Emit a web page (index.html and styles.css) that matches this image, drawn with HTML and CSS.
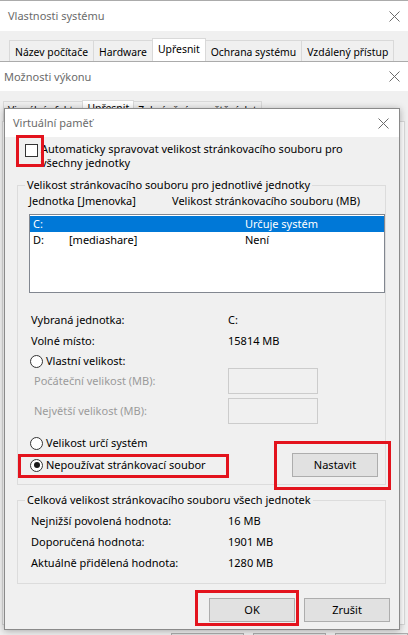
FILE: index.html
```html
<!DOCTYPE html>
<html lang="cs">
<head>
<meta charset="utf-8">
<title>Virtuální paměť</title>
<link rel="stylesheet" href="styles.css">
</head>
<body>
<div class="win win-sys">
  <div class="titlebar">
    <span class="title">Vlastnosti systému</span>
    <svg class="close" width="11" height="11" viewBox="0 0 11 11"><path d="M0.5 0.5L10.5 10.5M10.5 0.5L0.5 10.5"/></svg>
  </div>
  <div class="tabs">
    <div class="tab">Název počítače</div>
    <div class="tab">Hardware</div>
    <div class="tab active">Upřesnit</div>
    <div class="tab">Ochrana systému</div>
    <div class="tab last">Vzdálený přístup</div>
  </div>
  <div class="tabpanel"></div>
</div>

<div class="win win-perf">
  <div class="titlebar">
    <span class="title">Možnosti výkonu</span>
    <svg class="close" width="11" height="11" viewBox="0 0 11 11"><path d="M0.5 0.5L10.5 10.5M10.5 0.5L0.5 10.5"/></svg>
  </div>
  <div class="tabs">
    <div class="tab">Vizuální efekty</div>
    <div class="tab active">Upřesnit</div>
    <div class="tab last">Zabránění spouštění dat</div>
  </div>
  <div class="tabpanel perf-panel"></div>
  <div class="perf-buttons">
    <div class="btn small"></div>
    <div class="btn small"></div>
    <div class="btn small"></div>
  </div>
</div>

<div class="dialog">
  <div class="titlebar dlg-title">
    <span class="title">Virtuální paměť</span>
    <svg class="close" width="11" height="11" viewBox="0 0 11 11"><path d="M0.5 0.5L10.5 10.5M10.5 0.5L0.5 10.5"/></svg>
  </div>
  <div class="dlg-body">
    <div class="check-row">
      <span class="checkbox"></span>
      <span class="check-label">Automaticky spravovat velikost stránkovacího souboru pro<br>všechny jednotky</span>
    </div>

    <fieldset class="group group-drives">
      <legend>Velikost stránkovacího souboru pro jednotlivé jednotky</legend>
      <div class="list-head">
        <span>Jednotka [Jmenovka]</span>
        <span>Velikost stránkovacího souboru (MB)</span>
      </div>
      <div class="listbox">
        <div class="list-row selected"><span>C:</span><span></span><span>Určuje systém</span></div>
        <div class="list-row"><span>D:</span><span>[mediashare]</span><span>Není</span></div>
      </div>

      <div class="kv row-a"><span>Vybraná jednotka:</span><span>C:</span></div>
      <div class="kv row-b"><span>Volné místo:</span><span>15814 MB</span></div>
      <div class="radio-row row-c"><span class="radio"></span><span>Vlastní velikost:</span></div>
      <div class="field-row row-d"><span class="disabled">Počáteční velikost (MB):</span><span class="input"></span></div>
      <div class="field-row row-e"><span class="disabled">Největší velikost (MB):</span><span class="input"></span></div>
      <div class="radio-row row-f"><span class="radio"></span><span>Velikost určí systém</span></div>
      <div class="row-g">
        <div class="radio-row"><span class="radio checked"></span><span>Nepoužívat stránkovací soubor</span></div>
        <div class="btn set-btn">Nastavit</div>
      </div>
    </fieldset>

    <fieldset class="group group-total">
      <legend>Celková velikost stránkovacího souboru všech jednotek</legend>
      <div class="kv"><span>Nejnižší povolená hodnota:</span><span>16 MB</span></div>
      <div class="kv"><span>Doporučená hodnota:</span><span>1901 MB</span></div>
      <div class="kv"><span>Aktuálně přidělená hodnota:</span><span>1280 MB</span></div>
    </fieldset>

    <div class="dlg-buttons">
      <div class="btn">OK</div>
      <div class="btn">Zrušit</div>
    </div>
  </div>
</div>

<div class="mark mark-check"></div>
<div class="mark mark-radio"></div>
<div class="mark mark-set"></div>
<div class="mark mark-ok"></div>
</body>
</html>
```

FILE: styles.css
```css
* { box-sizing: border-box; }
html, body { margin: 0; padding: 0; }
body {
  width: 408px;
  height: 635px;
  overflow: hidden;
  position: relative;
  background: #f0f0f0;
  font-family: "Noto Sans", "Open Sans", sans-serif;
  font-size: 11px;
  line-height: 14px;
  color: #000;
}

/* generic windows */
.win {
  position: absolute;
  background: #f0f0f0;
  border: 1px solid #ababab;
}
.titlebar {
  background: #fff;
  display: flex;
  align-items: center;
  justify-content: space-between;
}
.title { color: #6b6b6b; font-size: 11px; }
.close { display: block; }
.close path { stroke: #6b6b6b; stroke-width: 1; fill: none; }

.tabs { display: flex; align-items: flex-end; }
.tab {
  height: 22px;
  padding: 0 5px;
  display: flex;
  align-items: center;
  border: 1px solid #d9d9d9;
  border-right: none;
  border-bottom: none;
  background: #f0f0f0;
  white-space: nowrap;
  font-size: 10.4px;
}
.tab.last { border-right: 1px solid #d9d9d9; }
.tab.active {
  background: #fff;
  height: 25px;
  margin-bottom: -1px;
  padding-bottom: 4px;
  border-right: 1px solid #d9d9d9;
  margin-right: -1px;
  position: relative;
  z-index: 1;
}
.tabpanel {
  border: 1px solid #d9d9d9;
  background: #fff;
}

/* Vlastnosti systému */
.win-sys { left: -1px; top: 0; width: 422px; height: 90px; z-index: 1; }
.win-sys .titlebar { height: 30px; padding: 0 20px 0 8px; }
.win-sys .tabs { margin-top: 7px; padding-left: 9px; }
.win-sys .tabpanel { height: 40px; margin-right: 16px; }

/* Možnosti výkonu */
.win-perf { left: -9px; top: 61px; width: 426px; height: 590px; z-index: 2; }
.win-perf .titlebar { height: 29px; padding: 0 16px 0 12px; }
.win-perf .tabs { margin-top: 9px; padding-left: 11px; }
.win-perf .tab {
  height: 20px;
  font-size: 10.4px;
  padding: 1px 4px 0;
  align-items: flex-start;
}
.win-perf .tab.active { height: 22px; padding-top: 0; }
.perf-panel { margin-left: 10px; width: 403px; height: 504px; }
.perf-buttons { display: flex; gap: 9px; margin-top: 8px; padding-left: 179px; }

/* buttons */
.btn {
  width: 86px;
  height: 24px;
  display: flex;
  align-items: center;
  justify-content: center;
  background: #e1e1e1;
  border: 1px solid #adadad;
}
.btn.small { width: 73px; height: 23px; }

/* Virtuální paměť dialog */
.dialog {
  position: absolute;
  z-index: 3;
  left: 4px;
  top: 108px;
  width: 396px;
  height: 522px;
  border: 1px solid #8a8a8a;
  background: #f0f0f0;
  box-shadow: 0 1px 7px rgba(0, 0, 0, 0.3);
  display: flex;
  flex-direction: column;
}
.dlg-title { height: 28px; padding: 0 10px 0 8px; }
.dlg-body { padding: 5px 13px 7px 12px; }

.check-row { display: flex; gap: 3px; margin-left: 8px; }
.checkbox {
  flex: none;
  width: 13px;
  height: 13px;
  margin-top: 2px;
  border: 1px solid #333;
  background: #fff;
}

.group {
  border: 1px solid #dcdcdc;
  margin: 8px 0 0;
  padding: 0;
  min-width: 0;
}
.group legend {
  padding: 0 2px;
  margin-left: 7px;
  line-height: 14px;
}
.group-drives { padding-bottom: 7px; }
.group-total { padding-bottom: 13px; }

.list-head {
  display: grid;
  grid-template-columns: 143px 1fr;
  padding: 2px 0 0 11px;
  height: 16px;
}
.listbox {
  margin: 6px 0 0 11px;
  height: 79px;
  border: 1px solid #828790;
  background: #fff;
  padding: 1px 0;
}
.list-row {
  display: grid;
  grid-template-columns: 36px 176px 1fr;
  align-items: center;
  height: 16px;
  padding-left: 3px;
}
.list-row.selected { background: #0078d7; color: #fff; }

.kv {
  display: grid;
  grid-template-columns: 197px auto;
  height: 14px;
  padding-left: 13px;
}
.group-total .kv { margin-top: 7px; }
.row-a { margin-top: 20px; }
.row-b { margin-top: 7px; }

.radio-row { display: flex; align-items: center; gap: 3px; height: 14px; }
.row-c, .row-f { padding-left: 12px; }
.row-c { margin-top: 6px; }
.row-f { margin-top: 12px; }
.radio {
  flex: none;
  width: 13px;
  height: 13px;
  border: 1px solid #333;
  border-radius: 50%;
  background: #fff;
  position: relative;
}
.radio.checked::after {
  content: "";
  position: absolute;
  left: 2.5px;
  top: 2.5px;
  width: 6px;
  height: 6px;
  border-radius: 50%;
  background: #1a1a1a;
}

.field-row {
  display: grid;
  grid-template-columns: 194px 90px;
  align-items: center;
  height: 26px;
  padding-left: 16px;
}
.row-e { margin-top: 4px; }
.disabled { color: #9b9b9b; }
.input {
  display: block;
  height: 26px;
  border: 1px solid #cccccc;
  background: #f0f0f0;
}

.row-g {
  display: flex;
  align-items: center;
  justify-content: space-between;
  height: 24px;
  margin-top: 3px;
  padding-left: 12px;
}
.set-btn { margin-right: 7px; }

.dlg-buttons {
  display: flex;
  justify-content: flex-end;
  gap: 9px;
  margin: 14px -4px 0 0;
}

/* red highlight annotations */
.mark {
  position: absolute;
  border: 3px solid #e3131d;
  z-index: 5;
}
.mark-check { left: 16px; top: 135px; width: 28px; height: 32px; }
.mark-radio { left: 18px; top: 454px; width: 211px; height: 24px; }
.mark-set { left: 274px; top: 441px; width: 117px; height: 49px; }
.mark-ok { left: 195px; top: 590px; width: 104px; height: 36px; }
```
